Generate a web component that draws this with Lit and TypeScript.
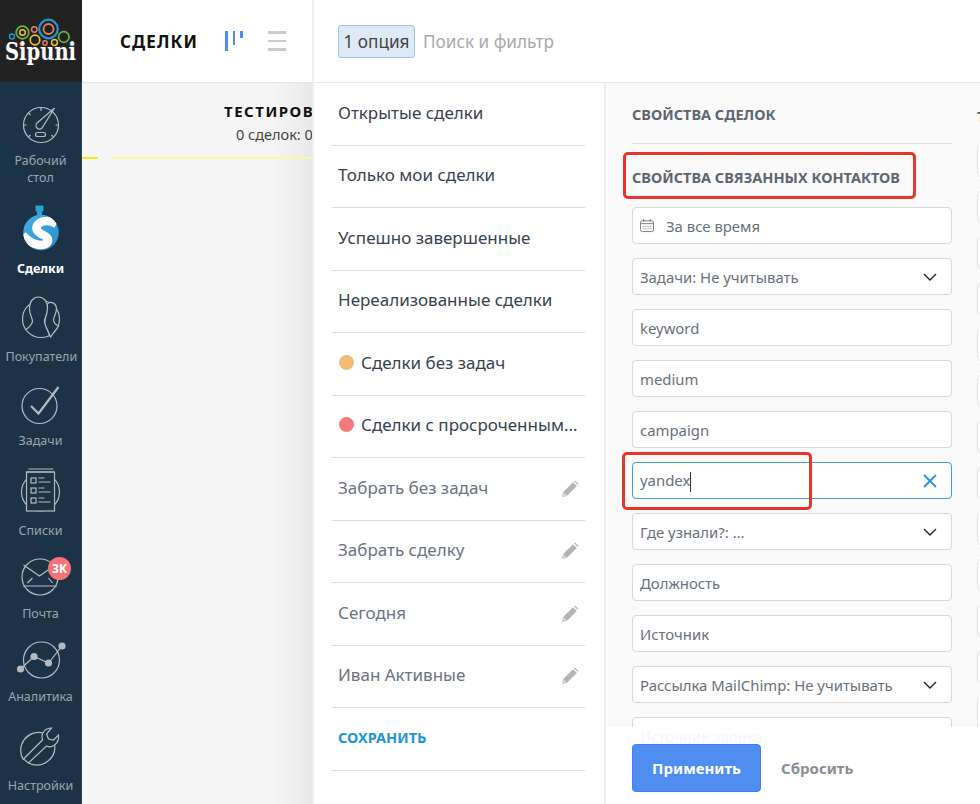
import { LitElement, html, css, svg } from "lit";
import { customElement } from "lit/decorators.js";

const pencil = html`<svg class="pencil" viewBox="0 0 18 18"><path d="M1 17l1.200-5L12 2.200l3.800 3.800L6 15.800z" fill="#b4b4b4"/><path d="M13 1.200l1-.7 3.500 3.500-.7 1z" fill="#b4b4b4"/><path d="M1 17l1.200-5 3.800 3.800z" fill="#d6d6d6"/></svg>`;
const chevron = html`<svg class="chev" viewBox="0 0 14 8"><path d="M1 1l6 6 6-6" fill="none" stroke="#222" stroke-width="1.400"/></svg>`;

const icons = [
  { vb: "10.5 102 60 46", g: svg`
    <circle cx="40.5" cy="125" r="17.5"/>
    <path d="M36.5 123L54 108 41.5 128a3.4 3.4 0 0 1-5-5z"/>
    <rect x="35" y="132.5" width="10" height="4" rx="2"/>
    <path d="M40.5 108v3M23 125h3M55 125h3M28 113l2 2M28 137l2-2M53 137l-2-2"/>` },
  { vb: "10.5 209 60 46", g: svg`
    <defs>
      <clipPath id="sclip"><circle cx="40.5" cy="233.5" r="17.8"/></clipPath>
      <linearGradient id="sgrad" x1="0" y1="0" x2="1" y2="1"><stop offset="0" stop-color="#3fb0e4"/><stop offset="1" stop-color="#2a8fcb"/></linearGradient>
    </defs>
    <rect x="35" y="206.500" width="8" height="6" rx="1" fill="#2f9fd8" stroke="none"/>
    <rect x="36.500" y="211" width="5" height="6" fill="#2f9fd8" stroke="none"/>
    <circle cx="40.5" cy="233.5" r="17.8" fill="url(#sgrad)" stroke="none"/>
    <g clip-path="url(#sclip)">
      <path d="M56 225C46 219 35 223 36 230C37 236 49 236 47.500 242C46 248 32 248 22 236" fill="none" stroke="#fff" stroke-width="8.500"/>
    </g>` },
  { vb: "10.5 297 60 46", g: svg`
    <circle cx="40.5" cy="320" r="18.5"/>
    <path fill="#1c3347" d="M47 305C49 302 55 303 56 309C56 315 53 318 53 321C53 324 56 326 58 327L50 338L44 325z"/>
    <path fill="#1c3347" d="M25 331C29 328 32 325 32 322C32 319 29 316 29 310C29 302 33 298 38 298C43 298 47 302 47 309C47 316 44 319 44 322C44 326 47 331 49 336"/>` },
  { vb: "10.5 383 60 46", g: svg`
    <circle cx="39" cy="407" r="17.5"/>
    <path d="M30.500 407l7.500 7.500L58 388" stroke-width="2.200"/>` },
  { vb: "10.5 469 60 46", g: svg`
    <circle cx="40" cy="493" r="19"/>
    <rect x="26" y="473" width="28" height="39" fill="#1c3347"/>
    <path d="M28 470h25M26 473h28"/>
    <rect x="30.500" y="479" width="5" height="5"/><rect x="30.500" y="489" width="5" height="5"/><rect x="30.500" y="499" width="5" height="5"/>
    <path d="M38 479h6M38 483h12M38 489h6M38 493h12M38 499h6M38 503h12"/>` },
  { vb: "10.5 554 60 46", g: svg`
    <circle cx="39.500" cy="578" r="18"/>
    <path d="M23 566l16 11 10-7M22.500 587h34M27 584l5-5M52 584l-4-5"/>` },
  { vb: "10.5 642 60 46", g: svg`
    <circle cx="41" cy="661" r="18"/>
    <path d="M20 670l13.500-12.500L48 664l13.500-17"/>
    <g fill="#b3bbc1" stroke="none"><circle cx="20" cy="670" r="3.600"/><circle cx="33.500" cy="657.500" r="3.600"/><circle cx="48" cy="664" r="3.600"/><circle cx="61.500" cy="647" r="3.600"/></g>` },
  { vb: "10.5 732 60 46", g: svg`
    <path d="M43 734a18 18 0 0 0-20 27M28 764a18 18 0 0 0 26-19"/>
    <path d="M28 764l-5-4 19-19c-2-6 2-12 9-12l-5 6 2 5 5 1 5-5c1 8-6 14-12 11z" fill="#1c3347"/>` },
];
const navLabels = ["Рабочий стол", "Сделки", "Покупатели", "Задачи", "Списки", "Почта", "Аналитика", "Настройки"];

const presets = [
  { t: "Открытые сделки" }, { t: "Только мои сделки" }, { t: "Успешно завершенные" }, { t: "Нереализованные сделки" },
  { t: "Сделки без задач", dot: "#f4bb72" }, { t: "Сделки с просроченным…", dot: "#f57a7c" },
  { t: "Забрать без задач", edit: true }, { t: "Забрать сделку", edit: true }, { t: "Сегодня", edit: true }, { t: "Иван Активные", edit: true },
];

const fields: { t: string; k?: string }[] = [
  { t: "За все время", k: "date" }, { t: "Задачи: Не учитывать", k: "sel" }, { t: "keyword" }, { t: "medium" }, { t: "campaign" },
  { t: "yandex", k: "focus" }, { t: "Где узнали?: …", k: "sel" }, { t: "Должность" }, { t: "Источник" },
  { t: "Рассылка MailChimp: Не учитывать", k: "sel" }, { t: "Источник звонка" }, { t: "Название ООО" },
];

@customElement("app-root")
export class AppRoot extends LitElement {
  static styles = css`
    :host { display: block; width: 980px; height: 804px; overflow: hidden; position: relative; font-family: "Noto Sans", "Open Sans", sans-serif; background: #f5f5f5; }
    .app { display: flex; height: 804px; }
    .side { width: 82px; flex: none; background: #1c3347; display: flex; flex-direction: column; border-right: 1px solid #2b4256; box-sizing: border-box; }
    .logo { height: 82px; background: #222; flex: none; margin-right: -1px; }
    .logo svg { display: block; }
    .nav { display: grid; grid-template-rows: 104px 91px 88px 84px 90px 83px 83px 89px; }
    .item { display: flex; flex-direction: column; justify-content: flex-end; align-items: center; color: #9aa5ae; font-size: 12.5px; line-height: 17px; text-align: center; position: relative; }
    .item svg { width: 60px; height: 46px; overflow: visible; fill: none; stroke: #b3bbc1; stroke-width: 1.2; flex: none; margin-bottom: 6px; }
    .item:nth-child(1) svg { margin-bottom: 4px; }
    .item:nth-child(4) svg { margin-bottom: 4px; }
    .item:nth-child(5) svg { margin-bottom: 8px; }
    .item:nth-child(7) svg { margin-bottom: 1px; }
    .item:nth-child(8) svg { margin-bottom: 0; }
    .item.on { color: #fff; font-weight: 700; }
    .item span { display: block; width: 70px; }
    .badge { position: absolute; left: 48px; top: 18px; width: 23px; height: 23px; border-radius: 50%; background: #f8727b; color: #fff; font-size: 12px; font-weight: 700; line-height: 23px; }
    .board { width: 230px; flex: none; display: flex; flex-direction: column; overflow: hidden; }
    .bhead { height: 83px; flex: none; box-sizing: border-box; background: #fff; border-bottom: 1px solid #e6e6e6; display: flex; align-items: center; padding-left: 38px; }
    .bhead h1 { margin: 0; font-size: 17px; font-weight: 700; letter-spacing: 1.100px; color: #111; width: 105px; flex: none; line-height: 1; }
    .kanban { display: flex; gap: 5px; width: 43px; flex: none; align-items: flex-start; height: 20px; }
    .kanban i { width: 2.500px; background: #4f8ef0; display: block; }
    .kanban i:nth-child(1) { height: 20px; } .kanban i:nth-child(2) { height: 14px; } .kanban i:nth-child(3) { height: 7px; }
    .lines { display: flex; flex-direction: column; gap: 6px; width: 18px; }
    .lines i { display: block; height: 2.500px; background: #ccc; }
    .bbody { flex: 1; position: relative; background: linear-gradient(90deg, #f5f5f5 0, #f5f5f5 190px, #e9e9e9 230px); padding-top: 19px; }
    .coltitle { margin-left: 142px; font-size: 15px; font-weight: 700; letter-spacing: 1.500px; color: #111; white-space: nowrap; line-height: 18px; }
    .colsub { margin-left: 154px; font-size: 14.500px; color: #444; white-space: nowrap; line-height: 20px; margin-top: 4px; }
    .rail { display: flex; gap: 13px; margin-top: 13px; }
    .rail i { display: block; height: 2px; background: #ffe31a; width: 16px; flex: none; }
    .rail i + i { background: #fbf7a6; flex: 1; }
    .panel { flex: 1; min-width: 0; display: flex; flex-direction: column; background: #fff; border-left: 2px solid #eee; box-sizing: border-box; }
    .search { height: 83px; flex: none; box-sizing: border-box; border-bottom: 1px solid #e6e6e6; display: flex; align-items: center; padding: 0 0 0 24px; gap: 8px; font-size: 17.200px; }
    .chip { height: 33px; box-sizing: border-box; width: 77px; background: #dfeaf7; border: 1.500px solid #9cc4ec; border-radius: 3px; color: #444; display: flex; align-items: center; justify-content: center; white-space: nowrap; }
    .ph { color: #a9a9a9; }
    .pbody { flex: 1; display: flex; min-height: 0; position: relative; }
    .presets { width: 292px; flex: none; box-sizing: border-box; padding: 0 19px 0 18px; border-right: 2px solid #eee; }
    .row { height: 62.500px; box-sizing: border-box; border-bottom: 1.500px solid #dcdde0; display: flex; align-items: center; padding: 0 6px 3px; font-size: 17px; color: #37434f; white-space: nowrap; }
    .row.edit { color: #6b7480; }
    .row.save { color: #1e96d8; font-weight: 700; font-size: 14.500px; }
    .dot { width: 15px; height: 15px; border-radius: 50%; margin: 0 7px 0 1px; flex: none; }
    .row .txt { flex: 1; }
    .pencil { width: 18px; height: 18px; flex: none; margin: 3px 0 0; }
    .filters { flex: 1; background: #fafafa; display: flex; gap: 25px; padding-left: 26px; overflow: hidden; min-width: 0; }
    .fcol { width: 320px; flex: none; }
    .fhead { height: 61px; box-sizing: border-box; padding-top: 2px; border-bottom: 1.500px solid #e2e2e2; display: flex; align-items: center; font-size: 14.500px; font-weight: 700; color: #5d6670; white-space: nowrap; }
    .fhead2 { height: 63px; box-sizing: border-box; padding-top: 2px; display: flex; align-items: center; font-size: 14.500px; font-weight: 700; color: #5d6670; white-space: nowrap; }
    .field { height: 37px; margin-bottom: 14px; box-sizing: border-box; background: #fff; border: 1.500px solid #d9d9d9; border-radius: 4px; display: flex; align-items: center; padding: 0 14px 0 7px; font-size: 14.900px; color: #68717b; white-space: nowrap; }
    .field .txt { flex: 1; }
    .field.focus { border-color: #3fa0dc; }
    .caret { display: inline-block; width: 1px; height: 20px; background: #333; vertical-align: middle; }
    .chev { width: 14px; height: 8px; flex: none; }
    .x { width: 14px; height: 14px; flex: none; }
    .cal { width: 14px; height: 15px; flex: none; margin-right: 12px; }
    .gcol { width: 300px; flex: none; padding-top: 62px; display: flex; flex-direction: column; gap: 14px; position: relative; }
    .gt { position: absolute; top: 23px; left: 0; font-size: 14.500px; font-weight: 700; color: #5d6670; }
    .gf { height: 32px; flex: none; box-sizing: border-box; border: 1.500px solid #e3e3e3; border-radius: 4px; background: #fcfcfc; }
    .foot { position: absolute; left: 292px; right: 0; bottom: 0; height: 77px; background: rgba(255,255,255,.93); box-sizing: border-box; padding: 17px 0 12px 26px; display: flex; align-items: stretch; gap: 20px; }
    .apply { width: 129px; box-sizing: border-box; background: #4f8ef0; border: 1px solid #4580dc; border-radius: 4px; color: #fff; font-weight: 700; font-size: 15px; display: flex; align-items: center; justify-content: center; }
    .reset { font-weight: 700; font-size: 15px; color: #8a8f94; display: flex; align-items: center; }
    .mark { position: absolute; border: 3px solid #e8352b; border-radius: 5px; box-sizing: border-box; pointer-events: none; }
    .m1 { left: 623px; top: 152px; width: 293px; height: 47px; }
    .m2 { left: 622px; top: 452px; width: 190px; height: 58px; }
  `;

  render() {
    return html`
      <div class="app">
        <aside class="side">
          <div class="logo">
            <svg width="82" height="82" viewBox="0 0 82 82" fill="none">
              <circle cx="48.500" cy="29" r="9.300" stroke="#1e9ad6" stroke-width="2.200"/>
              <circle cx="48.500" cy="29" r="5" stroke="#ee7d5b" stroke-width="1.800"/>
              <circle cx="22.500" cy="32.500" r="6.300" stroke="#6db33f" stroke-width="1.800"/>
              <circle cx="22.500" cy="32.500" r="2.800" stroke="#f0c33c" stroke-width="1.500"/>
              <circle cx="12" cy="36.500" r="2.500" stroke="#1e9ad6" stroke-width="1.400"/>
              <circle cx="34.300" cy="29.500" r="2.700" stroke="#ee7d5b" stroke-width="1.500"/>
              <circle cx="35" cy="40" r="4.800" stroke="#f0c33c" stroke-width="1.700"/>
              <circle cx="22" cy="44" r="2.500" fill="#ee7d5b"/>
              <circle cx="45" cy="43" r="2.200" stroke="#ee7d5b" stroke-width="1.400"/>
              <circle cx="54.500" cy="42.500" r="2.900" stroke="#f0c33c" stroke-width="1.500"/>
              <circle cx="63.800" cy="37" r="5.300" stroke="#6db33f" stroke-width="1.700"/>
              <circle cx="72" cy="44" r="2.500" fill="#1e9ad6"/>
              <text x="5" y="59.500" fill="#fff" font-family="DejaVu Serif" font-weight="700" font-size="24" textLength="71" lengthAdjust="spacingAndGlyphs">Sipuni</text>
            </svg>
          </div>
          <nav class="nav">
            ${navLabels.map((l, i) => html`
              <div class="item ${i === 1 ? "on" : ""}">
                <svg viewBox="${icons[i].vb}">${icons[i].g}</svg>
                <span>${l}</span>
                ${i === 5 ? html`<div class="badge">3K</div>` : ""}
              </div>`)}
          </nav>
        </aside>
        <section class="board">
          <header class="bhead">
            <h1>СДЕЛКИ</h1>
            <div class="kanban"><i></i><i></i><i></i></div>
            <div class="lines"><i></i><i></i><i></i></div>
          </header>
          <div class="bbody">
            <div class="coltitle">ТЕСТИРОВАНИЕ</div>
            <div class="colsub">0 сделок: 0 ₽</div>
            <div class="rail"><i></i><i></i></div>
          </div>
        </section>
        <section class="panel">
          <div class="search"><div class="chip">1 опция</div><div class="ph">Поиск и фильтр</div></div>
          <div class="pbody">
            <div class="presets">
              ${presets.map(p => html`
                <div class="row ${p.edit ? "edit" : ""}">
                  ${p.dot ? html`<span class="dot" style="background:${p.dot}"></span>` : ""}
                  <span class="txt">${p.t}</span>
                  ${p.edit ? pencil : ""}
                </div>`)}
              <div class="row save">СОХРАНИТЬ</div>
            </div>
            <div class="filters">
              <div class="fcol">
                <div class="fhead">СВОЙСТВА СДЕЛОК</div>
                <div class="fhead2">СВОЙСТВА СВЯЗАННЫХ КОНТАКТОВ</div>
                ${fields.map(f => html`
                  <div class="field ${f.k === "focus" ? "focus" : ""}">
                    ${f.k === "date" ? html`<svg class="cal" viewBox="0 0 15 15" fill="none" stroke="#777" stroke-width="1"><rect x=".5" y="2.500" width="14" height="11.500" rx="2"/><path d="M4 .5v3M11 .5v3M.5 5.500h14"/><path d="M3 8.500h9M3 11h9" stroke-dasharray="1 1"/></svg>` : ""}
                    <span class="txt">${f.t}${f.k === "focus" ? html`<span class="caret"></span>` : ""}</span>
                    ${f.k === "sel" ? chevron : ""}
                    ${f.k === "focus" ? html`<svg class="x" viewBox="0 0 14 14"><path d="M1 1l12 12M13 1L1 13" stroke="#2a93d8" stroke-width="1.800" fill="none"/></svg>` : ""}
                  </div>`)}
              </div>
              <div class="gcol">
                <div class="gt">ТЕГИ</div>
                ${Array.from({ length: 15 }, () => html`<div class="gf"></div>`)}
              </div>
            </div>
            <div class="foot"><div class="apply">Применить</div><div class="reset">Сбросить</div></div>
          </div>
        </section>
      </div>
      <div class="mark m1"></div>
      <div class="mark m2"></div>
    `;
  }
}
